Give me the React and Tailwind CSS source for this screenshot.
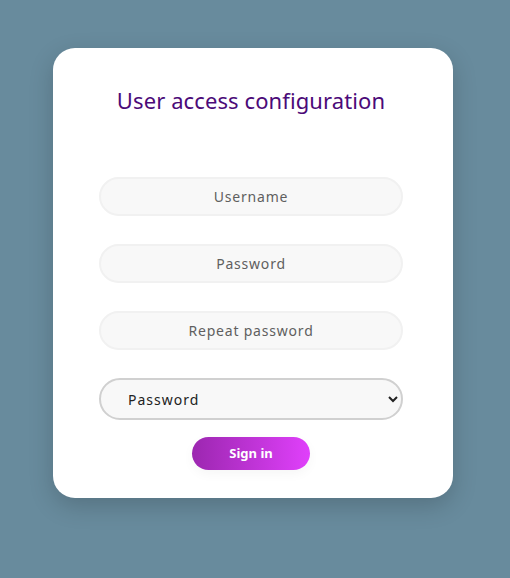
export default function App() {
  return (
    <div className="min-h-screen bg-[#688b9d] flex pl-[53px] pt-[48px]" style={{ fontFamily: '"Noto Sans", sans-serif' }}>
      <div className="w-[400px] h-[450px] pr-[4px] bg-white rounded-[22px] shadow-[0_8px_24px_rgba(0,0,0,0.18)] flex flex-col items-center">
        <h1 className="mt-[36px] text-[22px] text-[#4b0a78] tracking-[0.1px]">User access configuration</h1>

        <div className="mt-[60px] flex flex-col gap-[28px]">
          {["Username", "Password", "Repeat password"].map((p) => (
            <input
              key={p}
              placeholder={p}
              className="w-[304px] h-[39px] rounded-full bg-[#f8f8f8] border-2 border-[#f1f1f1] text-center text-[14px] tracking-[0.8px] placeholder:text-[#5f5f5f] outline-none"
            />
          ))}
        </div>

        <select className="mt-[28px] w-[304px] h-[42px] rounded-full bg-[#f8f8f8] border-2 border-[#d0d0d0] pl-[23px] pr-[8px] text-[14px] tracking-[1px] text-[#222] outline-none">
          <option>Password</option>
        </select>

        <button className="mt-[17px] w-[118px] h-[33px] rounded-full bg-gradient-to-r from-[#9c27b0] to-[#e040fb] text-white text-[13px] font-bold shadow-[0_4px_12px_rgba(0,0,0,0.04)]">
          Sign in
        </button>
      </div>
    </div>
  )
}
